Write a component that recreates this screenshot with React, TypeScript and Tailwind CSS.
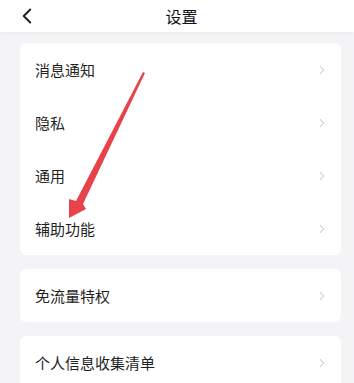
import { ChevronLeft, ChevronRight } from 'lucide-react';

const font = { fontFamily: '"Noto Sans CJK SC", "Noto Sans", sans-serif' };

function Row({ label }: { label: string }) {
  return (
    <div className="h-[53px] flex items-center justify-between pl-[15px] pr-[12px]">
      <span className="text-[15px] text-[#1f1f1f] leading-none">{label}</span>
      <ChevronRight className="w-[14px] h-[14px] text-[#c8c8c8]" strokeWidth={1.8} />
    </div>
  );
}

export default function App() {
  const mainItems = ['消息通知', '隐私', '通用', '辅助功能'];

  return (
    <div className="relative w-[354px] h-[383px] overflow-hidden bg-[#f4f4f6]" style={font}>
      {/* Header */}
      <header className="h-[32px] bg-white flex items-center relative shadow-[0_1px_3px_rgba(0,0,0,0.04)]">
        <ChevronLeft className="absolute left-[14px] top-[3px] w-[26px] h-[26px] text-[#222]" strokeWidth={1.8} />
        <div className="flex-1 flex justify-center pl-[9px]">
          <span className="text-[16px] text-[#111] leading-none">设置</span>
        </div>
      </header>

      <div className="flex flex-col gap-[15px] pt-[11px] pl-[20px] pr-[13px]">
        <div className="bg-white rounded-[6px]">
          {mainItems.map((item) => (
            <Row key={item} label={item} />
          ))}
        </div>
        <div className="bg-white rounded-[6px] -mt-[1px]">
          <Row label="免流量特权" />
        </div>
        <div className="bg-white rounded-[6px] -mt-[1px]">
          <Row label="个人信息收集清单" />
        </div>
      </div>

      {/* Red annotation arrow */}
      <svg className="absolute left-0 top-0 pointer-events-none" width="354" height="383" viewBox="0 0 354 383">
        <polygon points="143,72 145,73 83,204 86,209 69,218 69,199 76,201" fill="#e8424a" />
      </svg>
    </div>
  );
}
